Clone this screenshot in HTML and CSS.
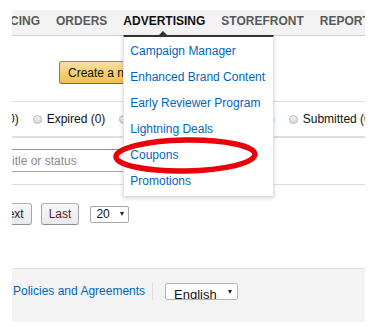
FILE: index.html
```html
<!DOCTYPE html>
<html lang="en">
<head>
    <meta charset="UTF-8">
    <meta name="viewport" content="width=device-width, initial-scale=1.0">
    <title>Coupons</title>
    <link rel="stylesheet" href="styles.css">
</head>
<body>
    <div class="page">
        <nav class="topnav">
            <span class="nav-item nav-item--cut">CING</span>
            <span class="nav-item">ORDERS</span>
            <div class="nav-item nav-item--active">
                ADVERTISING
                <ul class="menu">
                    <li><a href="#">Campaign Manager</a></li>
                    <li><a href="#">Enhanced Brand Content</a></li>
                    <li><a href="#">Early Reviewer Program</a></li>
                    <li><a href="#">Lightning Deals</a></li>
                    <li><a href="#">Coupons</a></li>
                    <li><a href="#">Promotions</a></li>
                </ul>
            </div>
            <span class="nav-item">STOREFRONT</span>
            <span class="nav-item">REPORTS</span>
        </nav>

        <div class="create-row">
            <button class="btn-primary">Create a new coupon</button>
        </div>

        <div class="filters">
            <span class="filter-cut">0)</span>
            <label class="radio-opt"><span class="radio"></span>Expired (0)</label>
            <label class="radio-opt"><span class="radio"></span>Active (0)</label>
            <label class="radio-opt"><span class="radio"></span>Running (0)</label>
            <label class="radio-opt"><span class="radio"></span>Submitted (0)</label>
        </div>

        <div class="search-row">
            <input class="search" type="text" placeholder="itle or status">
        </div>

        <div class="pager">
            <button class="btn btn-next">Next</button>
            <button class="btn btn-last">Last</button>
            <div class="select select--small"><span>20</span><span class="caret"></span></div>
        </div>

        <footer class="footer">
            <a class="footer-link" href="#">Policies and Agreements</a>
            <span class="footer-sep"></span>
            <div class="select select--lang"><span>English</span><span class="caret"></span></div>
        </footer>

        <!-- red marker drawn over the screenshot -->
        <svg class="annotation" width="145" height="38" viewBox="0 0 145 38">
            <ellipse cx="72.5" cy="18.5" rx="69.5" ry="15.5" fill="none" stroke="#e8000b" stroke-width="5.5" transform="rotate(-1 72.5 18.5)"/>
        </svg>
    </div>
</body>
</html>
```

FILE: styles.css
```css
body {
    margin: 0;
    background: #fff;
    font-family: 'Liberation Sans', Arial, sans-serif;
    font-size: 12px;
    color: #111;
}

.page {
    position: relative;
    width: 353px;
    height: 313px;
    margin: 10px 0 0 12px;
    overflow: hidden;
}

/* top navigation */
.topnav {
    display: flex;
    gap: 16px;
    height: 26px;
    background: #f3f3f3;
    border-bottom: 1px solid #cfcfcf;
    box-sizing: border-box;
    white-space: nowrap;
}

.nav-item {
    flex-shrink: 0;
    height: 25px;
    padding-bottom: 3px;
    box-sizing: border-box;
    line-height: 22px;
    font-weight: bold;
    color: #595959;
}

.nav-item--cut {
    margin-left: -2px;
}

.nav-item--active {
    position: relative;
    color: #111;
}

.nav-item--active::after {
    content: '';
    position: absolute;
    bottom: 0;
    left: 36px;
    border-left: 4px solid transparent;
    border-right: 4px solid transparent;
    border-bottom: 4px solid #333;
    z-index: 6;
}

.menu {
    position: absolute;
    top: 100%;
    left: 0;
    z-index: 5;
    width: 151px;
    margin: 0;
    padding: 1px 0 2px;
    list-style: none;
    background: #fff;
    border-top: 2px solid #333;
    border-left: 1px solid #e4e4e4;
    border-right: 1px solid #e4e4e4;
    box-sizing: border-box;
    box-shadow: 0 2px 4px rgba(0,0,0,0.18);
    font-weight: normal;
}

.menu li {
    padding-left: 6px;
    line-height: 26px;
}

.menu a {
    color: #0066c0;
    text-decoration: none;
}

/* create button */
.create-row {
    padding: 25px 0 17px 47px;
}

.btn-primary {
    display: block;
    height: 23px;
    padding: 0 8px;
    border: 1px solid;
    border-color: #a88734 #9c7e31 #846a29;
    border-radius: 3px;
    background: linear-gradient(#f7dfa5, #f0c14b);
    font-family: inherit;
    font-size: 12px;
    color: #111;
    white-space: nowrap;
}

/* status filters */
.filters {
    display: flex;
    align-items: center;
    gap: 14px;
    height: 37px;
    border-top: 1px solid #dedede;
    border-bottom: 2px solid #dedede;
    box-sizing: border-box;
    white-space: nowrap;
}

.filter-cut {
    margin-left: -4px;
}

.radio-opt {
    display: flex;
    flex-shrink: 0;
    align-items: center;
    gap: 5px;
}

.radio {
    width: 9px;
    height: 9px;
    border: 1px solid #b5b5b5;
    border-radius: 50%;
    box-sizing: border-box;
    background: linear-gradient(#f4f4f4, #d8d8d8);
}

/* search */
.search-row {
    padding: 11px 0 12px;
}

.search {
    display: block;
    width: 200px;
    height: 23px;
    margin-left: -10px;
    padding: 0 0 0 9px;
    border: 1px solid #a6a6a6;
    border-top-color: #949494;
    box-sizing: border-box;
    font-family: inherit;
    font-size: 12px;
}

.search::placeholder {
    color: #8c8c8c;
}

/* paging */
.pager {
    display: flex;
    align-items: center;
    padding-top: 18px;
    border-top: 1px solid #dedede;
}

.btn {
    height: 22px;
    padding: 0 7px;
    border: 1px solid;
    border-color: #adb1b8 #a2a6ac #8d9096;
    border-radius: 3px;
    background: linear-gradient(#f7f8fa, #e7e9ec);
    font-family: inherit;
    font-size: 12px;
    color: #222;
}

.btn-next {
    margin-left: -21px;
}

.btn-last {
    margin-left: 9px;
    color: #5a1c2c;
}

.select {
    display: flex;
    align-items: center;
    justify-content: space-between;
    border: 1px solid #a6a6a6;
    border-radius: 2px;
    background: #fff;
    box-sizing: border-box;
    overflow: hidden;
    color: #111;
}

.select--small {
    width: 39px;
    height: 17px;
    margin-left: 11px;
    padding: 0 4px 0 5px;
    font-size: 12px;
}

.caret {
    width: 0;
    height: 0;
    border-left: 2.5px solid transparent;
    border-right: 2.5px solid transparent;
    border-top: 4px solid #222;
}

/* footer */
.footer {
    display: flex;
    align-items: flex-start;
    height: 54px;
    margin-top: 43px;
    padding: 14px 0 0 1px;
    border-top: 1px solid #dedede;
    background: #f3f3f3;
    box-sizing: border-box;
}

.footer-link {
    line-height: 17px;
    color: #0066c0;
    text-decoration: none;
}

.footer-sep {
    width: 1px;
    height: 17px;
    margin: 0 12px 0 7px;
    background: #dcdcdc;
}

.select--lang {
    width: 73px;
    height: 17px;
    padding: 2px 5px 0 8px;
    align-items: flex-start;
    font-size: 13px;
    line-height: 17px;
    border-color: #b5b5b5;
}

.select--lang .caret {
    margin-top: 4px;
}

.annotation {
    position: absolute;
    left: 101px;
    top: 127px;
    z-index: 10;
}
```
